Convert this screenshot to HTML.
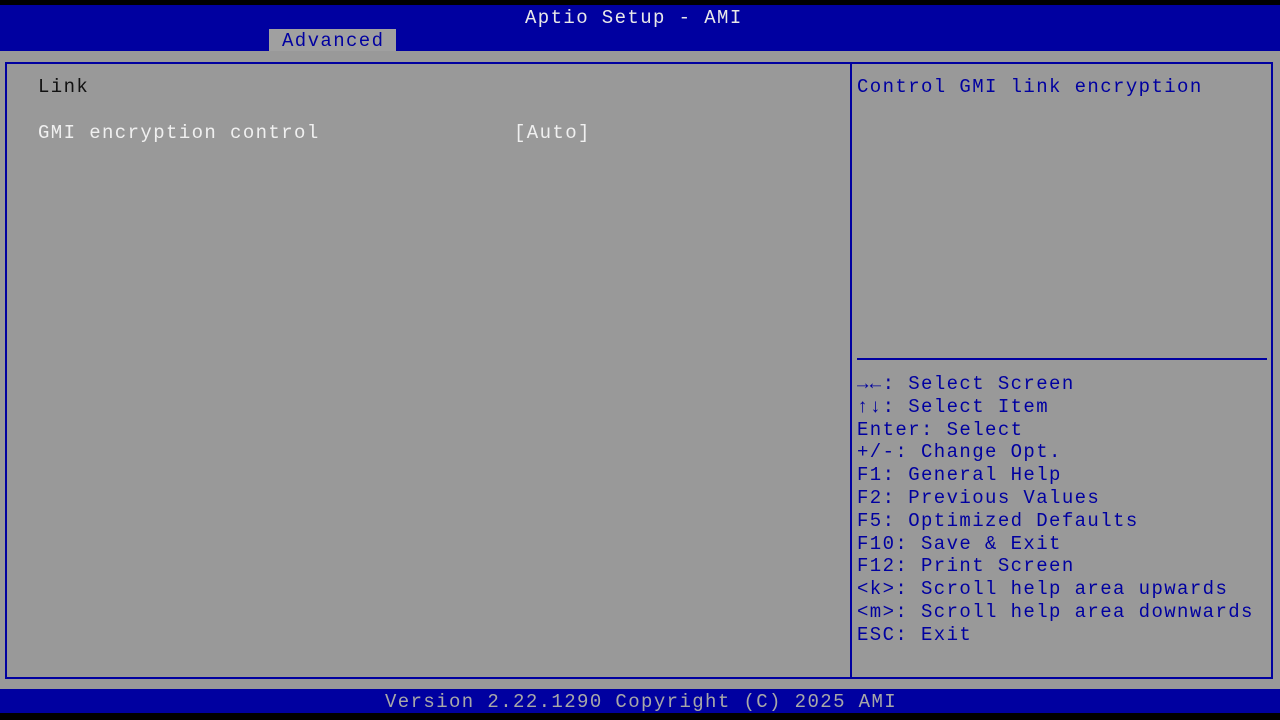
<!DOCTYPE html>
<html><head><style>
html,body{margin:0;padding:0;width:1280px;height:720px;overflow:hidden;background:#000;}
body{position:relative;font-family:"Liberation Mono","DejaVu Sans Mono",monospace;font-size:19px;letter-spacing:1.4px;}
.t{position:absolute;white-space:pre;line-height:22.8px;}
#hdr{position:absolute;left:0;top:5px;width:1280px;height:46px;background:#0000a0;}
#tab{position:absolute;left:269px;top:29px;width:127px;height:22px;background:#a0a0a0;}
#main{position:absolute;left:0;top:51px;width:1280px;height:638px;background:#999999;}
#frame{position:absolute;left:5px;top:62px;width:1264px;height:613px;border:2px solid #0000a0;}
#div{position:absolute;left:850px;top:62px;width:2px;height:617px;background:#0000a0;}
#sep{position:absolute;left:857px;top:358px;width:410px;height:2px;background:#0000a0;}
#ftr{position:absolute;left:0;top:689px;width:1280px;height:24px;background:#0000a0;}
.help{color:#0000a0;}
b{font-weight:bold;}
</style></head><body>
<div id="hdr"></div>
<div id="tab"></div>
<div id="main"></div>
<div id="frame"></div>
<div id="div"></div>
<div id="sep"></div>
<div id="ftr"></div>
<div class="t" style="left:525px;top:7px;color:#e8e8e8;">Aptio Setup - AMI</div>
<div class="t" style="left:282px;top:30px;color:#0000a0;">Advanced</div>
<div class="t" style="left:38px;top:76px;color:#111;">Link</div>
<div class="t" style="left:38px;top:122px;color:#f0f0f0;">GMI encryption control</div>
<div class="t" style="left:514px;top:122px;color:#f0f0f0;">[Auto]</div>
<div class="t help" style="left:857px;top:76px;">Control GMI link encryption</div>
<div class="t help" style="left:857px;top:373px;"><b>→←</b>: Select Screen
<b>↑↓</b>: Select Item
Enter: Select
+/-: Change Opt.
F1: General Help
F2: Previous Values
F5: Optimized Defaults
F10: Save &amp; Exit
F12: Print Screen
&lt;k&gt;: Scroll help area upwards
&lt;m&gt;: Scroll help area downwards
ESC: Exit</div>
<div class="t" style="left:385px;top:691px;color:#a8a8a8;">Version 2.22.1290 Copyright (C) 2025 AMI</div>
</body></html>
